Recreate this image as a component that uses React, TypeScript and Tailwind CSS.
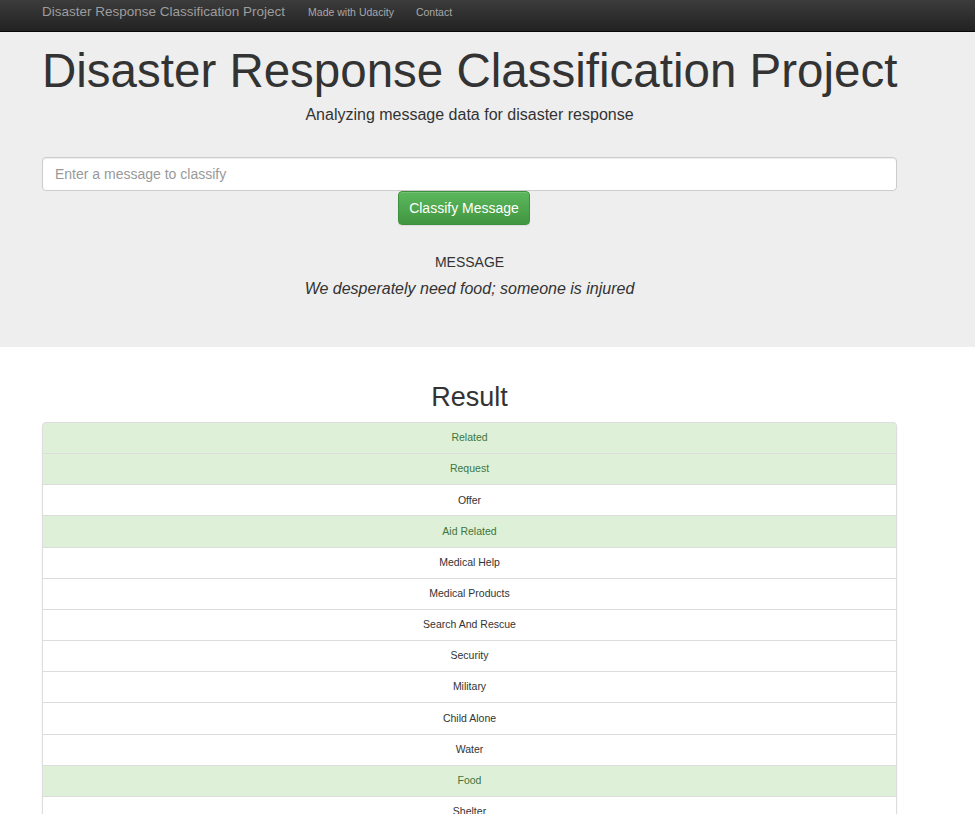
const categories = [
  { label: "Related", hit: true },
  { label: "Request", hit: true },
  { label: "Offer" },
  { label: "Aid Related", hit: true },
  { label: "Medical Help" },
  { label: "Medical Products" },
  { label: "Search And Rescue" },
  { label: "Security" },
  { label: "Military" },
  { label: "Child Alone" },
  { label: "Water" },
  { label: "Food", hit: true },
  { label: "Shelter" },
  { label: "Clothing" },
  { label: "Money" },
  { label: "Missing People" },
  { label: "Refugees" },
  { label: "Death" },
  { label: "Other Aid" },
  { label: "Infrastructure Related" },
];

export default function App() {
  return (
    <main className="h-screen overflow-hidden bg-white font-['Liberation_Sans',Arial,sans-serif] text-[#333]">

      <nav className="h-[32px] border-b border-[#080808] bg-gradient-to-b from-[#3c3c3c] to-[#222]">
        <div className="ml-[42px] flex h-[25px] items-center">
          <a className="text-[13.5px] text-[#9d9d9d]">Disaster Response Classification Project</a>
          <a className="ml-[23px] text-[10.5px] text-[#a8a8a8]">Made with Udacity</a>
          <a className="ml-[22px] text-[10.5px] text-[#a8a8a8]">Contact</a>
        </div>
      </nav>

      <section className="h-[315px] bg-[#eee]">
        <div className="ml-[42px] w-[855px] pt-[12px] text-center">
          <h1 className="whitespace-nowrap text-[47.5px] leading-[54px]">Disaster Response Classification Project</h1>
          <p className="mt-[5px] text-[16px] leading-[23px]">Analyzing message data for disaster response</p>

          <input
            placeholder="Enter a message to classify"
            className="mt-[31px] block h-[34px] w-full rounded-[4px] border border-[#ccc] bg-white px-3 text-[14px] shadow-[inset_0_1px_1px_rgba(0,0,0,0.075)] placeholder:text-[#999]"
          />

          <div className="flex">
            <button className="ml-[356px] h-[34px] w-[132px] rounded-[4px] border border-[#3e8f3e] bg-gradient-to-b from-[#5cb85c] to-[#419641] text-[14px] text-white shadow-[inset_0_1px_0_rgba(255,255,255,0.15),0_1px_1px_rgba(0,0,0,0.075)]">
              Classify Message
            </button>
          </div>

          <p className="mt-[27px] text-[14px] leading-[20px]">MESSAGE</p>
          <p className="mt-[5px] text-[16px] italic leading-[23px]">We desperately need food; someone is injured</p>
        </div>
      </section>

      <section className="ml-[42px] w-[855px] text-center">
        <h2 className="mt-[35px] text-[27px] leading-[31px]">Result</h2>
        <ul className="mt-[9px] rounded-[4px] shadow-[0_1px_2px_rgba(0,0,0,0.075)]">
          {categories.map((c) => (
            <li
              key={c.label}
              className={`-mb-px flex h-[32.17px] items-center justify-center border border-[#ddd] text-[10.5px] first:rounded-t-[4px] ${
                c.hit ? "bg-[#dff0d8] text-[#3c763d]" : "bg-white text-[#333]"
              }`}
            >
              {c.label}
            </li>
          ))}
        </ul>
      </section>

    </main>
  );
}
